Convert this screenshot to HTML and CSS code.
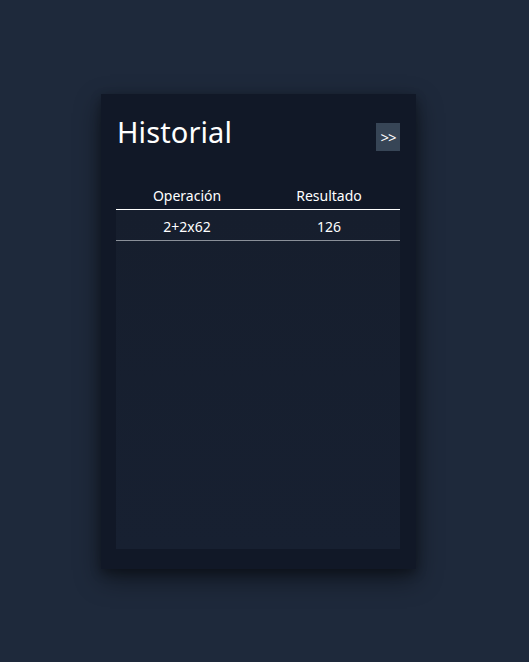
FILE: index.html
```html
<!DOCTYPE html>
<html lang="es">
<head>
<meta charset="utf-8">
<title>Historial</title>
<link rel="stylesheet" href="styles.css">
</head>
<body>
<div class="stage">
  <aside class="panel">
    <header class="panel-head">
      <h1 class="title">Historial</h1>
      <button class="toggle" type="button">&gt;&gt;</button>
    </header>
    <div class="table-wrap">
      <table class="history">
        <thead>
          <tr><th>Operación</th><th>Resultado</th></tr>
        </thead>
        <tbody>
          <tr><td>2+2x62</td><td>126</td></tr>
        </tbody>
      </table>
    </div>
  </aside>
</div>
</body>
</html>
```
FILE: styles.css
```css
html, body {
  margin: 0;
  padding: 0;
  background: #1e293b;
  font-family: "Noto Sans", "Open Sans", sans-serif;
  color: #fff;
}
.stage {
  width: 529px;
  height: 662px;
  padding: 94px 0 0 101px;
  box-sizing: border-box;
}
.panel {
  width: 315px;
  height: 475px;
  box-sizing: border-box;
  background: #111827;
  padding: 0 16px 20px 15px;
  display: flex;
  flex-direction: column;
  box-shadow: 0 10px 25px rgba(0,0,0,0.45), 0 4px 10px rgba(0,0,0,0.3);
}
.panel-head {
  display: flex;
  justify-content: space-between;
  align-items: flex-start;
  padding-top: 18px;
  height: 82px;
  box-sizing: border-box;
}
.title {
  margin: 0 0 0 1px;
  font-size: 29px;
  font-weight: 400;
  line-height: 40px;
  letter-spacing: 0.1px;
}
.toggle {
  margin-top: 11px;
  width: 24px;
  height: 28px;
  padding: 0;
  border: none;
  background: #374556;
  color: #fff;
  font-family: inherit;
  font-size: 15px;
  line-height: 28px;
  letter-spacing: -1px;
}
.table-wrap {
  flex: 1;
  background: linear-gradient(#111827 0, #111827 33px, #161e2d 33px, #172031 100%);
}
.history {
  width: 100%;
  border-collapse: collapse;
  table-layout: fixed;
  font-size: 14px;
}
.history th {
  font-weight: 400;
  height: 33px;
  padding: 6px 0 0;
  border-bottom: 1px solid #fff;
  box-sizing: border-box;
  vertical-align: middle;
}
.history td {
  text-align: center;
  height: 31px;
  padding: 3px 0 0;
  box-sizing: border-box;
  border-bottom: 1px solid #8a9099;
}
```
